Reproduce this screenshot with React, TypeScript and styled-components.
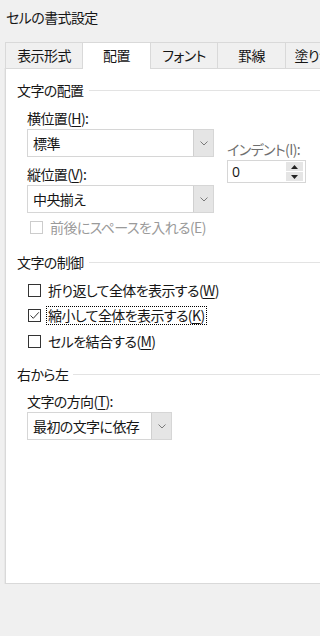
import React from 'react';
import styled, { createGlobalStyle } from 'styled-components';

const Global = createGlobalStyle`
  html, body { margin: 0; padding: 0; background: #f0f0f0; overflow: hidden; }
  body {
    font-family: "Noto Sans CJK JP", "Noto Sans", sans-serif;
    font-feature-settings: "palt";
    letter-spacing: -0.6px;
    color: #161616;
  }
`;

const Window = styled.div`
  width: 320px;
  height: 636px;
  background: #f0f0f0;
  overflow: hidden;
  display: flex;
  flex-direction: column;
`;

const TitleBar = styled.div`
  height: 34px;
  line-height: 34px;
  padding-left: 6px;
  font-size: 14px;
`;

const TabStrip = styled.div`
  display: flex;
  align-items: flex-start;
  margin-top: 8px;
  padding-left: 5px;
  height: 26px;
  position: relative;
  z-index: 1;
`;

const Tab = styled.div<{ $w: number; $active?: boolean }>`
  flex: none;
  width: ${(p) => p.$w}px;
  height: ${(p) => (p.$active ? 27 : 26)}px;
  box-sizing: border-box;
  margin-left: -1px;
  &:first-child { margin-left: 0; }
  border: 1px solid #d9d9d9;
  border-bottom: none;
  background: ${(p) => (p.$active ? '#ffffff' : '#f0f0f0')};
  position: relative;
  z-index: ${(p) => (p.$active ? 2 : 1)};
  font-size: 14px;
  line-height: 24px;
  text-align: center;
  white-space: nowrap;
  overflow: hidden;
`;

const Panel = styled.div`
  margin-left: 5px;
  margin-right: -10px;
  height: 516px;
  box-sizing: border-box;
  background: #fff;
  border: 1px solid #d9d9d9;
  box-shadow: -1px 0 0 #e8e8e8;
  padding: 11px 0 0 11px;
`;

const Heading = styled.div<{ $mt?: number }>`
  display: flex;
  align-items: center;
  height: 20px;
  line-height: 20px;
  font-size: 14px;
  margin-top: ${(p) => p.$mt ?? 0}px;
  white-space: nowrap;
  &::after {
    content: '';
    flex: 1;
    height: 1px;
    background: #e3e3e3;
    margin-left: 5px;
  }
`;

const Group = styled.div`
  display: flex;
  padding-left: 10px;
`;

const Column = styled.div<{ $w?: number; $pt?: number; $ml?: number }>`
  display: flex;
  flex-direction: column;
  ${(p) => (p.$w ? `width: ${p.$w}px;` : '')}
  padding-top: ${(p) => p.$pt ?? 0}px;
  margin-left: ${(p) => p.$ml ?? 0}px;
`;

const Label = styled.div<{ $mt?: number; $muted?: boolean; $ml?: number }>`
  height: 22px;
  line-height: 22px;
  font-size: 14px;
  margin-top: ${(p) => p.$mt ?? 0}px;
  margin-left: ${(p) => p.$ml ?? 0}px;
  color: ${(p) => (p.$muted ? '#6f6f6f' : '#161616')};
  white-space: nowrap;
`;

const Key = styled.span`
  text-decoration: underline;
  text-underline-offset: 2px;
  text-decoration-thickness: 1px;
`;

const SelectBox = styled.div<{ $w: number; $ml?: number }>`
  display: flex;
  width: ${(p) => p.$w}px;
  height: 28px;
  margin-left: ${(p) => p.$ml ?? 0}px;
  box-sizing: border-box;
  border: 1px solid #d6d6d6;
  background: #fff;
`;

const SelectText = styled.div`
  flex: 1;
  padding-left: 5px;
  line-height: 26px;
  font-size: 14px;
  white-space: nowrap;
`;

const SelectButton = styled.div`
  width: 19px;
  background: #e5e5e5;
  border-left: 1px solid #d0d0d0;
  display: flex;
  align-items: center;
  justify-content: center;
`;

const Chevron = () => (
  <svg width="8" height="5" viewBox="0 0 8 5">
    <path d="M0.5 0.5 L4 4 L7.5 0.5" fill="none" stroke="#7a7a7a" strokeWidth="1" />
  </svg>
);

const Select = ({ value, width, ml }: { value: string; width: number; ml?: number }) => (
  <SelectBox $w={width} $ml={ml}>
    <SelectText>{value}</SelectText>
    <SelectButton>
      <Chevron />
    </SelectButton>
  </SelectBox>
);

const SpinBox = styled.div`
  display: flex;
  width: 79px;
  height: 23px;
  box-sizing: border-box;
  border: 1px solid #d6d6d6;
  background: #fff;
`;

const SpinValue = styled.div`
  flex: 1;
  padding-left: 4px;
  line-height: 21px;
  font-size: 14px;
  letter-spacing: 0;
  font-family: "Open Sans", "Noto Sans", sans-serif;
`;

const SpinButtons = styled.div`
  width: 17px;
  margin: 1px 2px 1px 0;
  display: flex;
  flex-direction: column;
  gap: 1px;
`;

const SpinHalf = styled.div`
  flex: 1;
  background: #e5e5e5;
  display: flex;
  align-items: center;
  justify-content: center;
`;

const CheckList = styled.div`
  display: flex;
  flex-direction: column;
  padding-left: 11px;
`;

const CheckRow = styled.div<{ $mt?: number; $h?: number; $pl?: number; $disabled?: boolean }>`
  display: flex;
  align-items: center;
  height: ${(p) => p.$h ?? 20}px;
  margin-top: ${(p) => p.$mt ?? 0}px;
  padding-left: ${(p) => p.$pl ?? 0}px;
  color: ${(p) => (p.$disabled ? '#9a9a9a' : '#161616')};
  font-size: 14px;
  white-space: nowrap;
`;

const Box = styled.div<{ $disabled?: boolean }>`
  flex: none;
  width: 13px;
  height: 13px;
  box-sizing: border-box;
  border: 1px solid ${(p) => (p.$disabled ? '#cccccc' : '#333333')};
  background: #fff;
  display: flex;
  align-items: center;
  justify-content: center;
`;

const CheckText = styled.span<{ $focus?: boolean }>`
  margin-left: 5px;
  padding: 0 1px;
  line-height: 17px;
  border: 1px ${(p) => (p.$focus ? 'dotted #000' : 'solid transparent')};
`;

const Check = ({
  label,
  k,
  checked,
  focus,
  disabled,
  mt,
  h,
  pl,
}: {
  label: string;
  k: string;
  checked?: boolean;
  focus?: boolean;
  disabled?: boolean;
  mt?: number;
  h?: number;
  pl?: number;
}) => (
  <CheckRow $mt={mt} $h={h} $pl={pl} $disabled={disabled}>
    <Box $disabled={disabled}>
      {checked && (
        <svg width="11" height="11" viewBox="0 0 11 11">
          <path d="M1.5 5.5 L4.3 8.3 L9.8 2.3" fill="none" stroke="#333" strokeWidth="1" />
        </svg>
      )}
    </Box>
    <CheckText $focus={focus}>
      {label}(
      {disabled ? k : <Key>{k}</Key>})
    </CheckText>
  </CheckRow>
);

export default function App() {
  return (
    <>
      <Global />
      <Window>
        <TitleBar>セルの書式設定</TitleBar>
        <TabStrip>
          <Tab $w={78}>表示形式</Tab>
          <Tab $w={69} $active>
            配置
          </Tab>
          <Tab $w={68}>フォント</Tab>
          <Tab $w={69}>罫線</Tab>
          <Tab $w={80}>塗りつぶし</Tab>
        </TabStrip>
        <Panel>
          <Heading>文字の配置</Heading>
          <Group>
            <Column $w={187}>
              <Label $mt={7}>
                横位置(<Key>H</Key>):
              </Label>
              <Select value="標準" width={187} />
              <Label $mt={6}>
                縦位置(<Key>V</Key>):
              </Label>
              <Select value="中央揃え" width={187} />
              <Check label="前後にスペースを入れる" k="E" disabled mt={2} h={24} pl={3} />
            </Column>
            <Column $pt={38} $ml={13}>
              <Label $muted>インデント(I):</Label>
              <SpinBox>
                <SpinValue>0</SpinValue>
                <SpinButtons>
                  <SpinHalf>
                    <svg width="7" height="4" viewBox="0 0 7 4">
                      <path d="M0 4 L3.5 0 L7 4 Z" fill="#222" />
                    </svg>
                  </SpinHalf>
                  <SpinHalf>
                    <svg width="7" height="4" viewBox="0 0 7 4">
                      <path d="M0 0 L3.5 4 L7 0 Z" fill="#222" />
                    </svg>
                  </SpinHalf>
                </SpinButtons>
              </SpinBox>
            </Column>
          </Group>
          <Heading $mt={13}>文字の制御</Heading>
          <CheckList>
            <Check label="折り返して全体を表示する" k="W" mt={8} />
            <Check label="縮小して全体を表示する" k="K" checked focus mt={5} />
            <Check label="セルを結合する" k="M" mt={6} />
          </CheckList>
          <Heading $mt={13}>右から左</Heading>
          <Label $mt={6} $ml={10}>
            文字の方向(<Key>T</Key>):
          </Label>
          <Select value="最初の文字に依存" width={145} ml={10} />
        </Panel>
      </Window>
    </>
  );
}
